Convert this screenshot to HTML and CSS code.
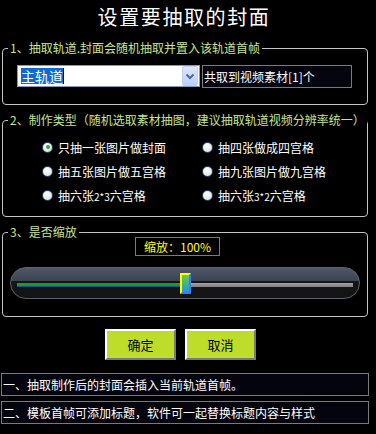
FILE: index.html
```html
<!DOCTYPE html>
<html lang="zh-CN">
<head>
  <meta charset="UTF-8">
  <meta name="viewport" content="width=device-width, initial-scale=1.0">
  <title>设置要抽取的封面</title>
  <link rel="stylesheet" href="styles.css">
</head>
<body>
  <div class="dialog">
    <h1 class="title">设置要抽取的封面</h1>

    <fieldset class="group group-track">
      <legend>1、抽取轨道.封面会随机抽取并置入该轨道首帧</legend>
      <div class="track-row">
        <div class="combo">
          <span class="combo-value">主轨道</span>
          <span class="combo-btn">
            <svg width="10" height="7" viewBox="0 0 10 7"><path d="M1.5 1.5 L5 5 L8.5 1.5" fill="none" stroke="#4d6a9c" stroke-width="2"/></svg>
          </span>
        </div>
        <div class="count">共取到视频素材[1]个</div>
      </div>
    </fieldset>

    <fieldset class="group group-type">
      <legend>2、制作类型（随机选取素材抽图，建议抽取轨道视频分辨率统一）</legend>
      <div class="radio-grid">
        <label class="radio checked"><span class="dot"></span><span>只抽一张图片做封面</span></label>
        <label class="radio"><span class="dot"></span><span>抽四张做成四宫格</span></label>
        <label class="radio"><span class="dot"></span><span>抽五张图片做五宫格</span></label>
        <label class="radio"><span class="dot"></span><span>抽九张图片做九宫格</span></label>
        <label class="radio"><span class="dot"></span><span>抽六张<span class="num">2*3</span>六宫格</span></label>
        <label class="radio"><span class="dot"></span><span>抽六张<span class="num">3*2</span>六宫格</span></label>
      </div>
    </fieldset>

    <fieldset class="group group-zoom">
      <legend>3、是否缩放</legend>
      <div class="zoom-value">缩放：100%</div>
      <div class="slider">
        <div class="slider-row">
          <span class="fill"></span>
          <span class="thumb"></span>
          <span class="rest"></span>
        </div>
      </div>
    </fieldset>

    <div class="actions">
      <button class="btn">确定</button>
      <button class="btn">取消</button>
    </div>

    <div class="note">一、抽取制作后的封面会插入当前轨道首帧。</div>
    <div class="note">二、模板首帧可添加标题，软件可一起替换标题内容与样式</div>
  </div>
</body>
</html>
```

FILE: styles.css
```css
body {
  margin: 0;
  padding: 0;
  background-color: #000;
  font-family: "Noto Sans CJK SC", "Liberation Sans", sans-serif;
  color: #fff;
}

.dialog {
  width: 376px;
  height: 434px;
  overflow: hidden;
}

.title {
  margin: 0 0 7px 0;
  padding-right: 8px;
  height: 34px;
  line-height: 34px;
  font-size: 20px;
  font-weight: normal;
  letter-spacing: 1.6px;
  text-align: center;
  color: #fff;
}

/* group boxes */
.group {
  box-sizing: border-box;
  width: 366px;
  min-width: 0;
  margin: 0 0 0 2px;
  padding: 0 0 0 5px;
  border: 1px solid #c4c4c4;
  border-radius: 4px;
}

.group legend {
  padding: 0 2px;
  font-size: 12px;
  line-height: 14px;
  color: #c8e490;
}

.group-track {
  height: 64px;
}

.group-type {
  height: 104px;
  margin-top: 8px;
}

.group-zoom {
  height: 92px;
  margin-top: 8px;
}

/* track select */
.track-row {
  display: flex;
  gap: 2px;
  margin: 10px 0 0 9px;
}

.combo {
  box-sizing: border-box;
  width: 183px;
  height: 22px;
  padding: 0 1px 0 3px;
  display: flex;
  align-items: center;
  justify-content: space-between;
  background-color: #fff;
  border: 1px solid #7f9db9;
}

.combo-value {
  font-size: 14px;
  line-height: 16px;
  color: #fff;
  background-color: #0b6bd6;
  border-right: 1px solid #000;
}

.combo-btn {
  box-sizing: border-box;
  width: 16px;
  height: 20px;
  display: flex;
  align-items: center;
  justify-content: center;
  background: linear-gradient(#dde7fd, #bccff7);
  border: 1px solid #c3d1f3;
  border-radius: 2px;
}

.count {
  box-sizing: border-box;
  width: 150px;
  height: 23px;
  padding-left: 1px;
  font-size: 12px;
  line-height: 21px;
  background-color: #05050f;
  border: 1px solid #7a7a7a;
}

/* radio buttons */
.radio-grid {
  display: grid;
  grid-template-columns: 160px 140px;
  grid-auto-rows: 24px;
  margin: 8px 0 0 34px;
}

.radio {
  display: flex;
  align-items: center;
  gap: 5px;
  font-size: 12px;
  color: #fff;
}

.radio .dot {
  box-sizing: border-box;
  width: 11px;
  height: 11px;
  border-radius: 50%;
  border: 1px solid #24507e;
  background: radial-gradient(circle at 40% 35%, #ffffff 0%, #ecebe6 55%, #c9c8c0 100%);
  position: relative;
}

.radio.checked .dot::after {
  content: "";
  position: absolute;
  left: 2.5px;
  top: 2.5px;
  width: 4px;
  height: 4px;
  border-radius: 50%;
  background-color: #2aa82a;
}

.radio .num {
  font-size: 10px;
}

/* zoom slider */
.zoom-value {
  box-sizing: border-box;
  width: 85px;
  height: 19px;
  margin: -2px 0 0 127px;
  font-size: 12px;
  line-height: 17px;
  text-align: center;
  color: #ffff00;
  border: 1px solid #7a7a7a;
}

.slider {
  box-sizing: border-box;
  width: 350px;
  height: 32px;
  margin: 11px 0 0 2px;
  padding: 3px 6px 0 6px;
  border: 1px solid #5c6270;
  border-radius: 16px;
  background: linear-gradient(to bottom, #4f5868 0%, #3b4250 45%, #151515 45%, #141414 100%);
  display: flex;
  align-items: center;
}

.slider-row {
  flex: 1;
  display: flex;
  align-items: center;
}

.fill {
  box-sizing: border-box;
  width: 163px;
  height: 4px;
  background-color: #1b9c12;
  border-bottom: 1px solid #1a4fa0;
}

.thumb {
  box-sizing: border-box;
  width: 11px;
  height: 21px;
  margin-top: -3px;
  border: 2px solid;
  border-color: #ffff00 #3a78ff #3a78ff #ffff00;
  background: linear-gradient(#6ccc3c, #1a9cd8);
}

.rest {
  flex: 1;
  height: 4px;
  background: linear-gradient(#a0a0a0, #808080);
}

/* buttons */
.actions {
  display: flex;
  gap: 9px;
  margin-top: 12px;
  padding-left: 105px;
}

.btn {
  box-sizing: border-box;
  width: 71px;
  height: 31px;
  padding: 0;
  font-family: inherit;
  font-size: 13px;
  color: #000;
  background-color: #bedc2a;
  border: 2px solid;
  border-color: #ffffff #7a7a7a #7a7a7a #ffffff;
}

/* notes */
.note {
  box-sizing: border-box;
  width: 368px;
  height: 23px;
  margin: 0 0 5px 1px;
  padding-left: 1px;
  font-size: 12px;
  line-height: 21px;
  background-color: #04040e;
  border: 1px solid #7a7a7a;
}

.actions + .note {
  margin-top: 13px;
}
```
